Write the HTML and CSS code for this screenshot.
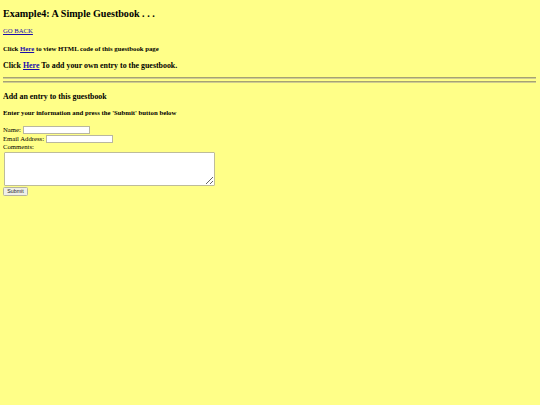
FILE: index.html
```html
<!DOCTYPE html>
<html>
<head>
<meta charset="utf-8">
<title>Example4: A Simple Guestbook</title>
<link rel="stylesheet" href="styles.css">
</head>
<body class="page">
<h2 class="title">Example4: A Simple Guestbook . . .</h2>
<div class="back-line"><a class="back" href="#">GO BACK</a></div>
<h5 class="small-head">Click <a href="#">Here</a> to view HTML code of this guestbook page</h5>
<h3 class="mid-head">Click <a href="#">Here</a> To add your own entry to the guestbook.</h3>
<hr class="rule">
<hr class="rule rule-second">
<h4 class="sec-head">Add an entry to this guestbook</h4>
<h5 class="info-head">Enter your information and press the 'Submit' button below</h5>
<form class="entry-form">
Name: <input class="field field-name" type="text"><br>
Email Address: <input class="field" type="text"><br>
Comments:
<textarea class="comments"></textarea>
<input class="submit" type="submit" value="Submit">
</form>
</body>
</html>
```
FILE: styles.css
```css
html {
  background: #ffff88;
}
.page {
  margin: 0 4px 0 3px;
  padding: 0;
  font-family: "Liberation Serif", "Times New Roman", serif;
  font-size: 6.7px;
  line-height: 8px;
  color: #000;
  background: #ffff88;
}
a {
  color: #1a0dab;
}
.title {
  font-size: 10.1px;
  line-height: 12px;
  margin: 0;
  padding-top: 8px;
}
.back-line {
  margin-top: 7px;
  line-height: 8px;
}
.back {
  color: #1a0dab;
}
.small-head {
  font-size: 6.75px;
  line-height: 8px;
  margin: 9.5px 0 0;
}
.mid-head {
  font-size: 7.9px;
  line-height: 9px;
  margin: 8px 0 0;
}
.rule {
  margin: 7.5px 0 0;
  border: 0;
  border-top: 1px solid #a6a372;
  border-bottom: 1px solid #cfcc90;
  height: 0;
}
.rule-second {
  margin-top: 2px;
}
.sec-head {
  font-size: 7.9px;
  line-height: 9px;
  margin: 8.5px 0 0;
}
.info-head {
  font-size: 6.75px;
  line-height: 8px;
  margin: 8.5px 0 0;
}
.entry-form {
  margin: 9px 0 0;
  line-height: 8.5px;
  font-size: 6.7px;
}
.field {
  box-sizing: border-box;
  width: 67px;
  height: 8px;
  padding: 0 1px;
  margin: 0;
  border: 1px solid #b9b7a0;
  background: #fff;
  font-size: 5px;
  vertical-align: middle;
}
.comments {
  display: block;
  box-sizing: border-box;
  width: 211px;
  height: 34px;
  padding: 1px;
  margin: 0 0 0 0.5px;
  border: 1px solid #bebc9a;
  border-radius: 1px;
  background: #fff;
  font-size: 5px;
  resize: both;
}
.submit {
  display: block;
  box-sizing: border-box;
  margin: 1.5px 0 0;
  padding: 0;
  height: 9px;
  width: 25px;
  font-family: "Liberation Sans", Arial, sans-serif;
  font-size: 5.3px;
  line-height: 7px;
  border: 1px solid #b6b4a0;
  border-radius: 1.5px;
  background: #efefe8;
  color: #222;
}
```
